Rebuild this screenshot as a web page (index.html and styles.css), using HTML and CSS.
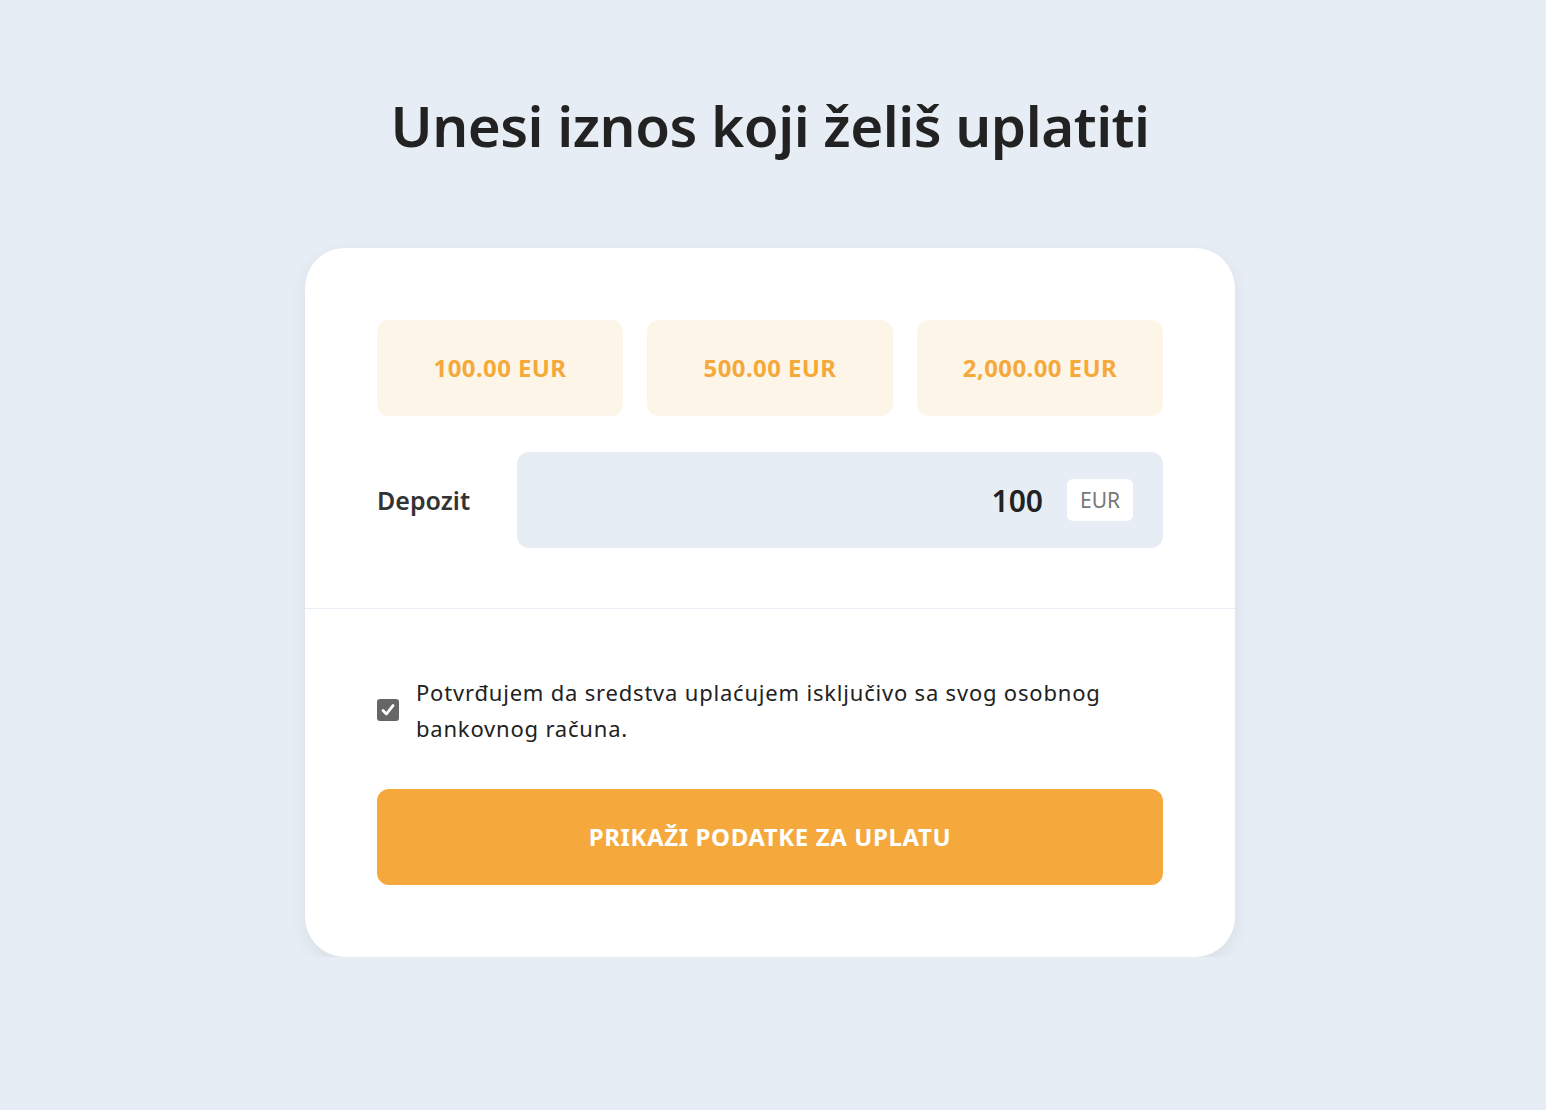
FILE: index.html
```html
<!DOCTYPE html>
<html lang="hr">
<head>
  <meta charset="UTF-8">
  <meta name="viewport" content="width=device-width, initial-scale=1.0">
  <title>Uplata</title>
  <link rel="stylesheet" href="styles.css">
</head>
<body>
  <main class="page">
    <h1 class="page__title">Unesi iznos koji želiš uplatiti</h1>

    <section class="deposit-card">
      <div class="deposit-card__top">
        <div class="presets">
          <button class="preset">100.00 EUR</button>
          <button class="preset">500.00 EUR</button>
          <button class="preset">2,000.00 EUR</button>
        </div>

        <div class="amount-row">
          <label class="amount-row__label" for="amount">Depozit</label>
          <div class="amount-field">
            <span class="amount-field__value" id="amount">100</span>
            <span class="amount-field__currency">EUR</span>
          </div>
        </div>
      </div>

      <div class="deposit-card__bottom">
        <label class="confirm">
          <span class="confirm__box">
            <svg width="16" height="16" viewBox="0 0 16 16">
              <path d="M3 8.6 L6.4 12 L13 3.6" fill="none" stroke="#fff" stroke-width="2.8" stroke-linecap="round" stroke-linejoin="round"/>
            </svg>
          </span>
          <span class="confirm__text">Potvrđujem da sredstva uplaćujem isključivo sa svog osobnog bankovnog računa.</span>
        </label>

        <button class="submit-btn">PRIKAŽI PODATKE ZA UPLATU</button>
      </div>
    </section>
  </main>
</body>
</html>
```

FILE: styles.css
```css
/* Osnovno */
body {
  margin: 0;
  background-color: #e7edf4;
  font-family: "Noto Sans", "Open Sans", sans-serif;
  color: #222;
}

.page {
  display: flex;
  flex-direction: column;
  align-items: center;
  padding-top: 86px;
  padding-right: 6px;
}

.page__title {
  margin: 0;
  font-size: 56.5px;
  line-height: 80px;
  font-weight: 600;
  color: #222;
  letter-spacing: -0.5px;
}

/* Kartica */
.deposit-card {
  margin-top: 82px;
  width: 930px;
  background-color: #fff;
  border-radius: 40px;
  box-shadow: 0 6px 16px rgba(40, 60, 90, 0.08);
}

.deposit-card__top {
  padding: 72px 72px 60px;
  border-bottom: 1px solid #e7edf4;
}

.presets {
  display: grid;
  grid-template-columns: repeat(3, 1fr);
  gap: 24px;
}

.preset {
  height: 96px;
  padding-bottom: 2px;
  border: none;
  border-radius: 12px;
  background-color: #fdf5e8;
  color: #f5a93b;
  font-family: inherit;
  font-size: 24px;
  font-weight: 700;
  letter-spacing: 0.4px;
  cursor: pointer;
}

.amount-row {
  display: flex;
  align-items: center;
  margin-top: 36px;
}

.amount-row__label {
  width: 140px;
  font-size: 25px;
  font-weight: 600;
  color: #333;
}

.amount-field {
  flex: 1;
  height: 96px;
  display: flex;
  align-items: center;
  justify-content: flex-end;
  gap: 24px;
  padding-right: 30px;
  background-color: #e7edf4;
  border-radius: 12px;
}

.amount-field__value {
  font-size: 30px;
  font-weight: 600;
  color: #222;
}

.amount-field__currency {
  width: 66px;
  height: 42px;
  display: flex;
  align-items: center;
  justify-content: center;
  background-color: #fff;
  border-radius: 6px;
  font-size: 21px;
  color: #777;
}

/* Donji dio */
.deposit-card__bottom {
  padding: 65px 72px 72px;
}

.confirm {
  display: flex;
  align-items: center;
  gap: 17px;
}

.confirm__box {
  flex: none;
  width: 22px;
  height: 22px;
  display: flex;
  align-items: center;
  justify-content: center;
  background-color: #666;
  border-radius: 3px;
}

.confirm__text {
  font-size: 22px;
  line-height: 36px;
  color: #222;
  letter-spacing: 0.8px;
}

.submit-btn {
  display: block;
  width: 100%;
  height: 96px;
  margin-top: 43px;
  padding-bottom: 3px;
  border: none;
  border-radius: 12px;
  background-color: #f5a93d;
  color: #fff;
  font-family: inherit;
  font-size: 24px;
  font-weight: 700;
  letter-spacing: 0.6px;
  cursor: pointer;
}
```
